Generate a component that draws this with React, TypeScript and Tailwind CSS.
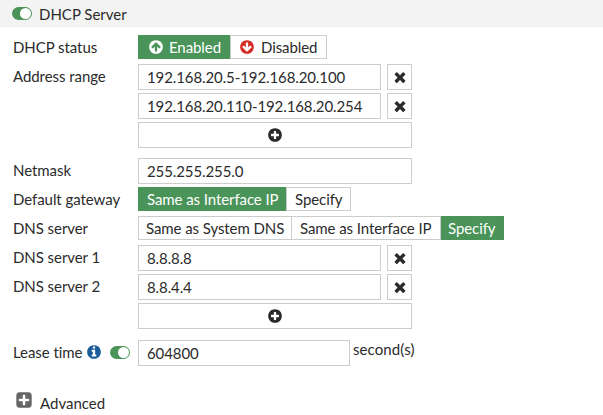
import type { ReactNode } from 'react';

const ICONS = {
  times:
    'M1490 1322q0 40-28 68l-136 136q-28 28-68 28t-68-28l-294-294-294 294q-28 28-68 28t-68-28l-136-136q-28-28-28-68t28-68l294-294-294-294q-28-28-28-68t28-68l136-136q28-28 68-28t68 28l294 294 294-294q28-28 68-28t68 28l136 136q28 28 28 68t-28 68l-294 294 294 294q28 28 28 68z',
  plusCircle:
    'M1344 960v-128q0-26-19-45t-45-19h-256v-256q0-26-19-45t-45-19h-128q-26 0-45 19t-19 45v256h-256q-26 0-45 19t-19 45v128q0 26 19 45t45 19h256v256q0 26 19 45t45 19h128q26 0 45-19t19-45v-256h256q26 0 45-19t19-45zm320-64q0 209-103 385.5t-279.5 279.5-385.5 103-385.5-103-279.5-279.5-103-385.5 103-385.5 279.5-279.5 385.5-103 385.5 103 279.5 279.5 103 385.5z',
  arrowUp:
    'M1412 895q0-27-18-45l-362-362-91-91q-18-18-45-18t-45 18l-91 91-362 362q-18 18-18 45t18 45l91 91q18 18 45 18t45-18l189-189v502q0 26 19 45t45 19h128q26 0 45-19t19-45v-502l189 189q19 19 45 19t45-19l91-91q18-18 18-45zm252 1q0 209-103 385.5t-279.5 279.5-385.5 103-385.5-103-279.5-279.5-103-385.5 103-385.5 279.5-279.5 385.5-103 385.5 103 279.5 279.5 103 385.5z',
  info:
    'M1152 1376v-160q0-14-9-23t-23-9h-96v-512q0-14-9-23t-23-9h-320q-14 0-23 9t-9 23v160q0 14 9 23t23 9h96v320h-96q-14 0-23 9t-9 23v160q0 14 9 23t23 9h448q14 0 23-9t9-23zm-128-896v-160q0-14-9-23t-23-9h-192q-14 0-23 9t-9 23v160q0 14 9 23t23 9h192q14 0 23-9t9-23zm640 416q0 209-103 385.5t-279.5 279.5-385.5 103-385.5-103-279.5-279.5-103-385.5 103-385.5 279.5-279.5 385.5-103 385.5 103 279.5 279.5 103 385.5z',
  plusSquare:
    'M1408 960v-128q0-26-19-45t-45-19h-320v-320q0-26-19-45t-45-19h-128q-26 0-45 19t-19 45v320h-320q-26 0-45 19t-19 45v128q0 26 19 45t45 19h320v320q0 26 19 45t45 19h128q26 0 45-19t19-45v-320h320q26 0 45-19t19-45zm256-544v960q0 119-84.5 203.5t-203.5 84.5h-960q-119 0-203.5-84.5t-84.5-203.5v-960q0-119 84.5-203.5t203.5-84.5h960q119 0 203.5 84.5t84.5 203.5z',
};

function Icon({ name, className = 'size-4' }: { name: keyof typeof ICONS; className?: string }) {
  return (
    <svg viewBox="0 0 1792 1792" fill="currentColor" className={`shrink-0 ${className}`}>
      <path d={ICONS[name]} />
    </svg>
  );
}

function Toggle() {
  return (
    <span className="flex h-[13px] w-5 shrink-0 items-center justify-end rounded-full bg-[#4a9459] p-px">
      <span className="size-[11px] rounded-full bg-white" />
    </span>
  );
}

function Row({ label, children }: { label?: ReactNode; children: ReactNode }) {
  return (
    <div className="flex h-[29px]">
      <div className="flex h-6 w-[125px] shrink-0 items-center tracking-[-0.06px]">{label}</div>
      {children}
    </div>
  );
}

function Field({ value, width }: { value: string; width: string }) {
  return (
    <div className={`flex h-[26px] items-center border border-[#ccc] pl-2 tracking-[-0.1px] ${width}`}>{value}</div>
  );
}

function IconButton({ name, width }: { name: keyof typeof ICONS; width: string }) {
  return (
    <button className={`flex h-[26px] items-center justify-center border border-[#ccc] ${width}`}>
      <Icon name={name} />
    </button>
  );
}

function Option({ active, width, children }: { active?: boolean; width: string; children: ReactNode }) {
  const tone = active ? 'border-[#4a9459] bg-[#4a9459] text-white' : 'border-[#ccc]';
  return (
    <button className={`flex h-6 items-center border whitespace-nowrap tracking-[-0.08px] ${tone} ${width}`}>
      {children}
    </button>
  );
}

function RemovableField({ label, value }: { label?: string; value: string }) {
  return (
    <Row label={label}>
      <Field value={value} width="w-[243px]" />
      <div className="pl-1.5">
        <IconButton name="times" width="w-[25px]" />
      </div>
    </Row>
  );
}

export default function App() {
  return (
    <div className="h-[415px] w-[603px] overflow-hidden bg-white font-['Lato',sans-serif] text-[15px] leading-5 text-[#2b2b2b]">
      <header className="flex h-[27px] items-center gap-[7px] bg-[#f3f3f3] pl-3">
        <Toggle />
        <span className="pt-px">DHCP Server</span>
      </header>
      <main className="pt-2 pl-[13px]">
        <Row label="DHCP status">
          <Option active width="w-[92px] pl-[9px]">
            <Icon name="arrowUp" className="mr-[5px] size-4" />
            Enabled
          </Option>
          <Option width="w-[97px] pl-2">
            <span className="flex text-[#d42d26]">
              <Icon name="arrowUp" className="mr-1.5 size-4 rotate-180" />
            </span>
            Disabled
          </Option>
        </Row>
        <RemovableField label="Address range" value="192.168.20.5-192.168.20.100" />
        <RemovableField value="192.168.20.110-192.168.20.254" />
        <Row>
          <IconButton name="plusCircle" width="w-[274px]" />
        </Row>
        <div className="pt-[7px]">
          <Row label="Netmask">
            <Field value="255.255.255.0" width="w-[274px]" />
          </Row>
          <Row label="Default gateway">
            <Option active width="w-[148px] pl-2">Same as Interface IP</Option>
            <Option width="w-[65px] pl-2">Specify</Option>
          </Row>
          <Row label="DNS server">
            <Option width="w-[154px] pl-[7px]">Same as System DNS</Option>
            <Option width="w-[149px] border-l-0 pl-2">Same as Interface IP</Option>
            <Option active width="w-[63px] pl-1.5">Specify</Option>
          </Row>
          <RemovableField label="DNS server 1" value="8.8.8.8" />
          <RemovableField label="DNS server 2" value="8.8.4.4" />
          <Row>
            <IconButton name="plusCircle" width="w-[274px]" />
          </Row>
        </div>
        <div className="pt-2">
          <Row
            label={
              <>
                <span className="w-[73px] whitespace-nowrap">Lease time</span>
                <span className="flex text-[#1b5d9b]">
                  <Icon name="info" />
                </span>
                <span className="ml-2 flex">
                  <Toggle />
                </span>
              </>
            }
          >
            <Field value="604800" width="w-[212px]" />
            <span className="-mt-px pl-[3px] tracking-[0.1px]">second(s)</span>
          </Row>
        </div>
        <div className="flex items-start gap-[7px] pt-[22px] pl-0.5">
          <span className="text-[#666]">
            <Icon name="plusSquare" className="size-[18px]" />
          </span>
          <span className="pt-0.5">Advanced</span>
        </div>
      </main>
    </div>
  );
}
